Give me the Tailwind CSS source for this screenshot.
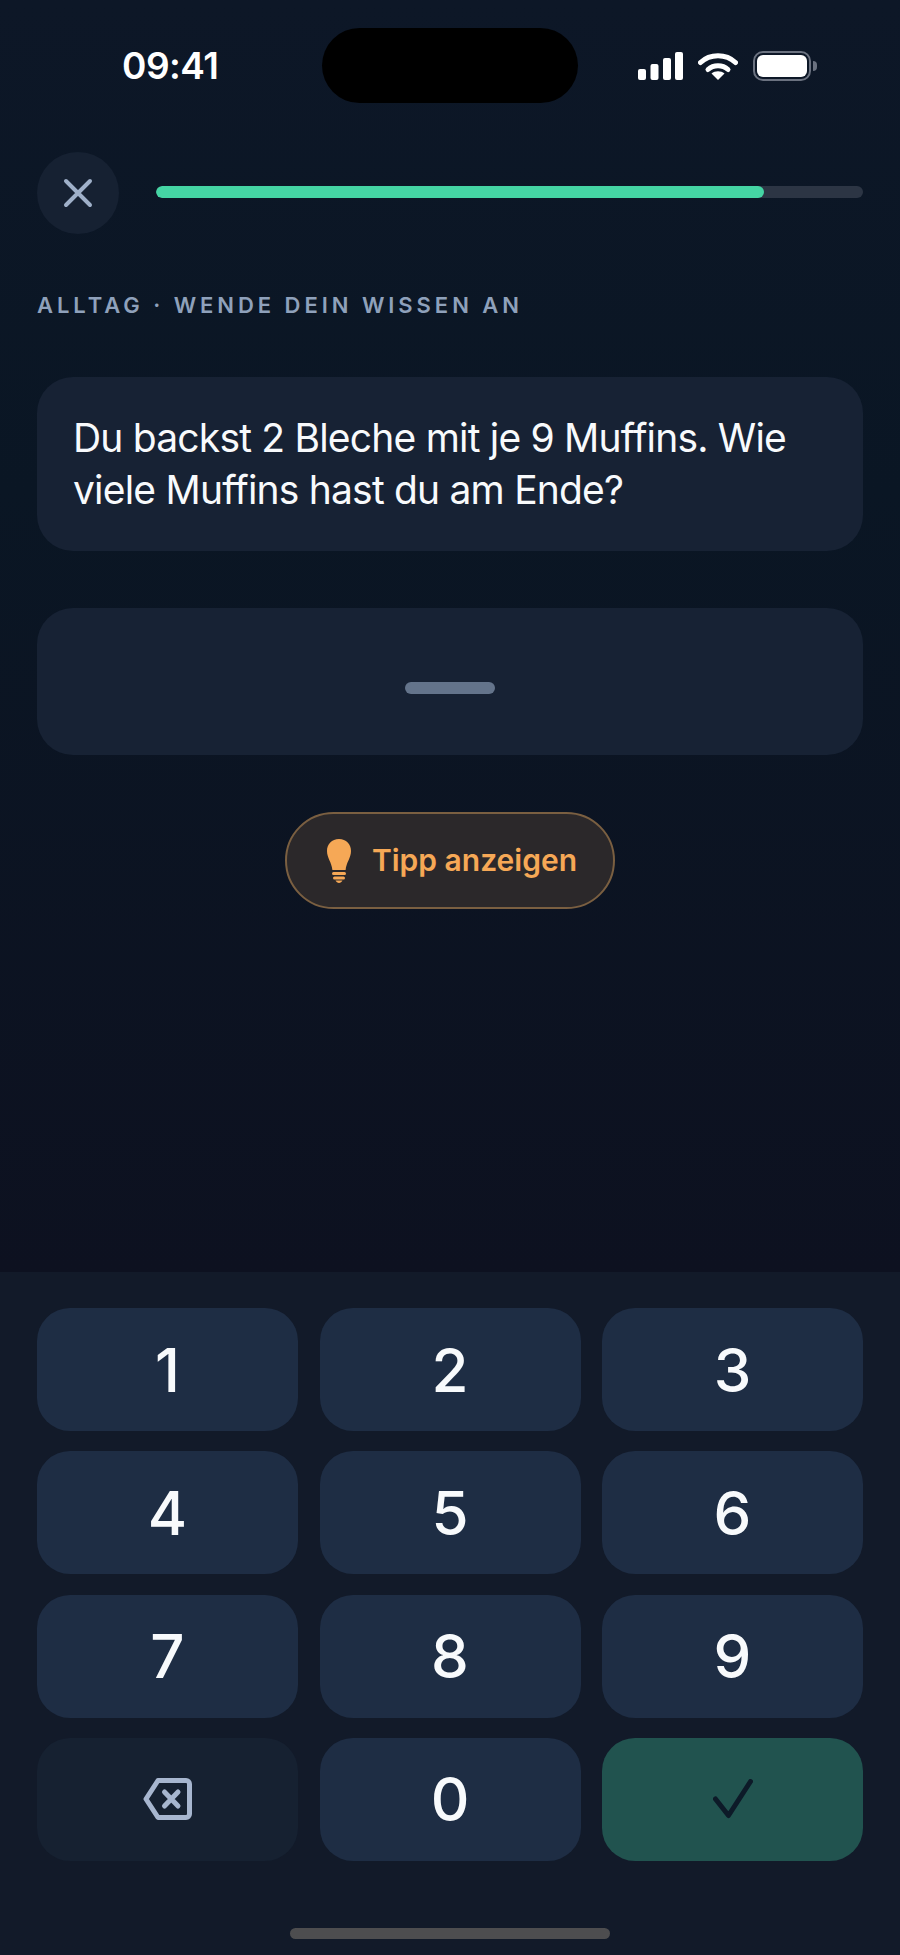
<!DOCTYPE html>
<html lang="de">
<head>
    <meta charset="UTF-8">
    <meta name="viewport" content="width=device-width, initial-scale=1.0">
    <title>Aufgabe</title>
    <script src="https://cdn.jsdelivr.net/npm/@tailwindcss/browser@4"></script>
</head>
<body class="bg-[#0c1322]">
    <div class="w-[900px] h-[1955px] flex flex-col overflow-hidden bg-linear-to-b from-[#0d1727] from-0% via-[#0a1624] via-25% to-[#0d1120] to-65% font-['Inter',sans-serif]">

        <!-- status bar -->
        <div class="grid grid-cols-[322px_256px_322px] pt-[28px]">
            <div class="flex items-center pl-[122px] text-[37px] tracking-[-0.5px] font-semibold leading-none text-white">09:41</div>
            <div class="h-[75px] rounded-full bg-black"></div>
            <div class="flex items-center pl-[60px]">
                <svg class="w-[45px] h-[28px]" viewBox="0 0 45 28" fill="#fff">
                    <rect x="0" y="17" width="8" height="11" rx="2"/>
                    <rect x="12.5" y="12" width="8" height="16" rx="2"/>
                    <rect x="25" y="6" width="8" height="22" rx="2"/>
                    <rect x="37" y="0" width="8" height="28" rx="2"/>
                </svg>
                <svg class="ml-[15px] w-[40px] h-[28px]" viewBox="0 0 40 28" fill="none">
                    <path d="M2.5 10.5C12 1.5 28 1.5 37.5 10.5" stroke="#fff" stroke-width="5" stroke-linecap="round"/>
                    <path d="M10 17.5C15.5 12.5 24.5 12.5 30 17.5" stroke="#fff" stroke-width="5" stroke-linecap="round"/>
                    <path d="M20 28L13.5 21.5C17 18.6 23 18.6 26.5 21.5Z" fill="#fff"/>
                </svg>
                <div class="ml-[15px] flex items-center">
                    <div class="w-[58px] h-[30px] rounded-[10px] border-[2.5px] border-[#6b7280] p-[2px]">
                        <div class="w-full h-full rounded-[6px] bg-white"></div>
                    </div>
                    <div class="ml-[2px] w-[4px] h-[10px] rounded-r-full bg-[#6b7280]"></div>
                </div>
            </div>
        </div>

        <!-- close + progress -->
        <div class="mt-[49px] px-[37px] flex items-center gap-[37px]">
            <div class="w-[82px] h-[82px] shrink-0 rounded-full bg-[#162132] flex items-center justify-center">
                <svg class="w-[30px] h-[30px]" viewBox="0 0 30 30" fill="none" stroke="#9fb0c9" stroke-width="4" stroke-linecap="round">
                    <path d="M3 3L27 27M27 3L3 27"/>
                </svg>
            </div>
            <div class="flex-1 h-[12px] mb-[2px] rounded-full bg-[#2c3544] overflow-hidden">
                <div class="h-full w-[86%] rounded-full bg-[#45d5a4]"></div>
            </div>
        </div>

        <div class="mt-[58px] px-[37px] text-[22px] leading-[26px] font-semibold tracking-[3.95px] text-[#8fa1bb]">ALLTAG · WENDE DEIN WISSEN AN</div>

        <!-- question -->
        <div class="mt-[59px] mx-[37px] h-[174px] rounded-[36px] bg-[#172234] px-[36px] py-[35px] text-[39px] tracking-[-0.8px] leading-[52px] text-[#f8fafc]">
            Du backst 2 Bleche mit je 9 Muffins. Wie viele Muffins hast du am Ende?
        </div>

        <!-- answer -->
        <div class="mt-[57px] mx-[37px] h-[147px] rounded-[36px] bg-[#172234] flex items-center justify-center pt-[13px]">
            <div class="w-[90px] h-[12px] rounded-full bg-[#64748b]"></div>
        </div>

        <!-- hint -->
        <div class="mt-[57px] mx-auto w-[330px] h-[97px] pl-[3px] rounded-full border-2 border-[#7a5f41] bg-[#2b282a] flex items-center justify-center gap-[20px] text-[30px] font-semibold text-[#f6a856]">
            <svg class="w-[26px] h-[44px]" viewBox="0 0 26 44" fill="#f6a856">
                <path d="M13 0C5.8 0 1 5.2 1 12c0 7 4.6 11 5.4 19h13.2C20.4 23 25 19 25 12 25 5.2 20.2 0 13 0Z"/>
                <rect x="6" y="33" width="14" height="3" rx="1.5"/>
                <rect x="7" y="37.5" width="12" height="3" rx="1.5"/>
                <path d="M9.5 41.5h7c-.8 1.6-2 2.5-3.5 2.5s-2.7-.9-3.5-2.5Z"/>
            </svg>
            <span>Tipp anzeigen</span>
        </div>

        <!-- keypad -->
        <div class="mt-auto h-[683px] bg-[#121a29] pt-[36px] px-[37px] flex flex-col">
            <div class="grid grid-cols-3 auto-rows-[123px] gap-x-[21.5px] gap-y-[20.3px] text-[60px] font-medium text-[#f8fafc]">
                <div class="rounded-[33px] bg-[#1e2d44] flex items-center justify-center">1</div>
                <div class="rounded-[33px] bg-[#1e2d44] flex items-center justify-center">2</div>
                <div class="rounded-[33px] bg-[#1e2d44] flex items-center justify-center">3</div>
                <div class="rounded-[33px] bg-[#1e2d44] flex items-center justify-center">4</div>
                <div class="rounded-[33px] bg-[#1e2d44] flex items-center justify-center">5</div>
                <div class="rounded-[33px] bg-[#1e2d44] flex items-center justify-center">6</div>
                <div class="rounded-[33px] bg-[#1e2d44] flex items-center justify-center">7</div>
                <div class="rounded-[33px] bg-[#1e2d44] flex items-center justify-center">8</div>
                <div class="rounded-[33px] bg-[#1e2d44] flex items-center justify-center">9</div>
                <div class="rounded-[33px] bg-[#162131] flex items-center justify-center">
                    <svg class="w-[49px] h-[42px]" viewBox="0 0 49 42" fill="none" stroke="#a7b6cf" stroke-width="5" stroke-linejoin="round" stroke-linecap="round">
                        <path d="M15 2.5H43a3.5 3.5 0 0 1 3.5 3.5v30a3.5 3.5 0 0 1-3.5 3.5H15L3 21Z"/>
                        <path d="M21.5 14L35 28M35 14L21.5 28"/>
                    </svg>
                </div>
                <div class="rounded-[33px] bg-[#1e2d44] flex items-center justify-center">0</div>
                <div class="rounded-[33px] bg-[#21534f] flex items-center justify-center">
                    <svg class="w-[40px] h-[40px]" viewBox="0 0 40 40" fill="none" stroke="#0d1a28" stroke-width="5" stroke-linecap="round" stroke-linejoin="round">
                        <path d="M2.5 20L15.5 36.5L37.5 2.5"/>
                    </svg>
                </div>
            </div>
            <div class="mt-[67px] mx-auto w-[320px] h-[11px] rounded-full bg-[#4d4d4f]"></div>
        </div>
    </div>
</body>
</html>
